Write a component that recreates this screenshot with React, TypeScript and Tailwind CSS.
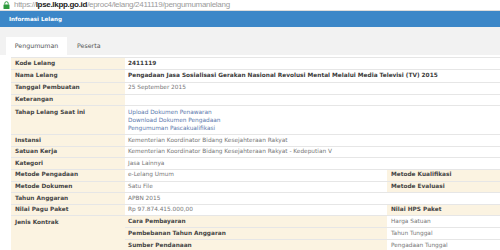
import React from "react"

const Lock = () => (
    <svg width="7" height="8" viewBox="0 0 7 8" className="shrink-0">
        <rect x="0.5" y="3.5" width="6" height="4.5" rx="0.5" fill="#2e9a3e" />
        <path d="M1.8 3.6V2.4a1.7 1.7 0 0 1 3.4 0v1.2" fill="none" stroke="#2e9a3e" strokeWidth="1" />
    </svg>
)

type Row = { label: string; value?: React.ReactNode; strong?: boolean; right?: string; h?: string }

const rows: Row[] = [
    { label: "Kode Lelang", value: "2411119", strong: true, h: "h-[12px]" },
    { label: "Nama Lelang", value: "Pengadaan Jasa Sosialisasi Gerakan Nasional Revolusi Mental Melalui Media Televisi (TV) 2015", strong: true, h: "h-[13px]" },
    { label: "Tanggal Pembuatan", value: "25 September 2015" },
    { label: "Keterangan", value: "" },
]

const rows2: Row[] = [
    { label: "Instansi", value: "Kementerian Koordinator Bidang Kesejahteraan Rakyat" },
    { label: "Satuan Kerja", value: "Kementerian Koordinator Bidang Kesejahteraan Rakyat - Kedeputian V" },
    { label: "Kategori", value: "Jasa Lainnya" },
    { label: "Metode Pengadaan", value: "e-Lelang Umum", right: "Metode Kualifikasi" },
    { label: "Metode Dokumen", value: "Satu File", right: "Metode Evaluasi" },
    { label: "Tahun Anggaran", value: "APBN 2015" },
    { label: "Nilai Pagu Paket", value: "Rp 97.874.415.000,00", right: "Nilai HPS Paket" },
]

const InfoRow = ({ r }: { r: Row }) => (
    <div className={`flex ${r.h ?? "h-[11.6px]"} border-b border-[#e6e6e6]`}>
        <div className="w-[114px] shrink-0 bg-[#fbf3e1] pl-[4px] flex items-center font-bold text-[#444]">{r.label}</div>
        <div className={`w-[262px] shrink-0 pl-[3px] flex items-center whitespace-nowrap ${r.strong ? "font-bold text-[#3a3a3a]" : "text-[#777]"}`}>{r.value}</div>
        {r.right ? (
            <div className="flex-1 bg-[#fbf3e1] pl-[4px] flex items-center font-bold text-[#444] whitespace-nowrap">{r.right}</div>
        ) : (
            <div className="flex-1" />
        )}
    </div>
)

const kontrak = [
    ["Cara Pembayaran", "Harga Satuan"],
    ["Pembebanan Tahun Anggaran", "Tahun Tunggal"],
    ["Sumber Pendanaan", "Pengadaan Tunggal"],
]

export default function App() {
    return (
        <div className="w-[500px] h-[250px] overflow-hidden bg-white" style={{ fontFamily: '"DejaVu Sans", Verdana, sans-serif' }}>
            <div className="h-[11px] flex items-center gap-[4px] pl-[3px] border-b border-[#dcdcdc] text-[8px] leading-none whitespace-nowrap tracking-[-0.3px]" style={{ fontFamily: '"Liberation Sans", Arial, sans-serif' }}>
                <Lock />
                <span>
                    <span className="text-[#9a9a9a]">https://</span>
                    <span className="text-[#222] font-bold">lpse.lkpp.go.id</span>
                    <span className="text-[#9a9a9a]">/eproc4/lelang/2411119/pengumumanlelang</span>
                </span>
            </div>
            <div className="h-[16px] bg-[#3c87c8] flex items-center pl-[9px] text-[5.6px] font-bold text-white">Informasi Lelang</div>
            <div className="h-[28px] bg-[#f2f2f2] flex items-end pl-[6px] gap-[10px]">
                <div className="w-[61px] h-[18px] bg-white flex items-center justify-center text-[6.3px] text-[#555]">Pengumuman</div>
                <div className="h-[18px] flex items-center text-[6.3px] text-[#555]">Peserta</div>
            </div>
            <div className="pl-[11px] pt-[2px] text-[5.8px] leading-none">
                <div className="border-t border-[#e6e6e6]">
                    {rows.map((r) => <InfoRow key={r.label} r={r} />)}
                    <div className="flex h-[29px] border-b border-[#e6e6e6]">
                        <div className="w-[114px] shrink-0 bg-[#fbf3e1] pl-[4px] pt-[4px] font-bold text-[#444]">Tahap Lelang Saat ini</div>
                        <div className="flex-1 pl-[3px] pt-[4px] flex flex-col gap-[2px] text-[#5b79ad]">
                            <span>Upload Dokumen Penawaran</span>
                            <span>Download Dokumen Pengadaan</span>
                            <span>Pengumuman Pascakualifikasi</span>
                        </div>
                    </div>
                    {rows2.map((r) => <InfoRow key={r.label} r={r} />)}
                    <div className="flex">
                        <div className="w-[114px] shrink-0 bg-[#fbf3e1] pl-[4px] pt-[4px] font-bold text-[#444]">Jenis Kontrak</div>
                        <div className="flex-1 flex flex-col">
                            {kontrak.map(([k, v]) => (
                                <div key={k} className="flex h-[12px] border-b border-[#e6e6e6]">
                                    <div className="w-[262px] shrink-0 bg-[#fbf3e1] pl-[3px] flex items-center font-bold text-[#444]">{k}</div>
                                    <div className="flex-1 pl-[4px] flex items-center text-[#777]">{v}</div>
                                </div>
                            ))}
                        </div>
                    </div>
                </div>
            </div>
        </div>
    )
}
